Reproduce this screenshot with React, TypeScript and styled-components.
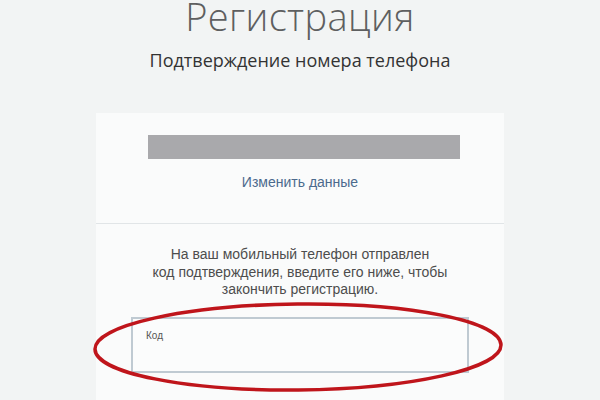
import React from "react";
import styled, { createGlobalStyle } from "styled-components";

const GlobalStyle = createGlobalStyle`
	html, body {
		margin: 0;
		padding: 0;
		background-color: #f2f4f4;
	}
	body {
		font-family: "Liberation Sans", Arial, sans-serif;
	}
`;

const Page = styled.div`
	width: 600px;
	height: 400px;
	overflow: hidden;
	display: flex;
	flex-direction: column;
	align-items: center;
`;

const Title = styled.h1`
	margin: 0;
	font-family: "Open Sans", sans-serif;
	font-size: 38px;
	line-height: 32px;
	font-weight: 300;
	color: #5e5f60;
	letter-spacing: 0.4px;
`;

const Subtitle = styled.h2`
	margin: 16px 0 0;
	font-family: "Open Sans", sans-serif;
	font-size: 18px;
	line-height: 24px;
	font-weight: 400;
	color: #333;
`;

const Card = styled.div`
	margin-top: 41px;
	width: 408px;
	flex: 1;
	background-color: #fafbfb;
	display: flex;
	flex-direction: column;
	align-items: center;
`;

const Section = styled.div`
	width: 100%;
	display: flex;
	flex-direction: column;
	align-items: center;
	padding-top: 22px;
`;

const PhoneBar = styled.div`
	width: 312px;
	height: 24px;
	margin-left: 8px;
	background-color: #a9a9ac;
`;

const ChangeLink = styled.a`
	margin-top: 15px;
	font-size: 14px;
	line-height: 16px;
	color: #4b6a8d;
	text-decoration: none;
	cursor: pointer;
`;

const Divider = styled.hr`
	width: 100%;
	margin: 33px 0 0;
	border: none;
	border-top: 1px solid #e1e5e7;
`;

const Notice = styled.p`
	margin: 0;
	font-size: 14px;
	line-height: 17.5px;
	color: #4d4d4d;
	text-align: center;
`;

const FieldWrapper = styled.div`
	position: relative;
	margin-top: 18px;
`;

const CodeField = styled.label`
	display: block;
	box-sizing: border-box;
	width: 338px;
	height: 56px;
	padding: 11px 13px;
	border: 2px solid #bfcad2;
	background-color: #fbfcfc;
	font-size: 10px;
	color: #555;
`;

const Marker = styled.svg`
	position: absolute;
	left: -40px;
	top: -16px;
	pointer-events: none;
`;

export default function App(): JSX.Element {
	return (
		<>
			<GlobalStyle />
			<Page>
				<Title>Регистрация</Title>
				<Subtitle>Подтверждение номера телефона</Subtitle>
				<Card>
					<Section>
						<PhoneBar />
						<ChangeLink>Изменить данные</ChangeLink>
					</Section>
					<Divider />
					<Section>
						<Notice>
							На ваш мобильный телефон отправлен
							<br />
							код подтверждения, введите его ниже, чтобы
							<br />
							закончить регистрацию.
						</Notice>
						<FieldWrapper>
							<CodeField>Код</CodeField>
							<Marker width="416" height="92" viewBox="0 0 416 92">
								<ellipse
									cx="207"
									cy="46"
									rx="203"
									ry="43"
									fill="none"
									stroke="#bf151b"
									strokeWidth="3.5"
									transform="rotate(-0.6 207 46)"
								/>
							</Marker>
						</FieldWrapper>
					</Section>
				</Card>
			</Page>
		</>
	);
}
